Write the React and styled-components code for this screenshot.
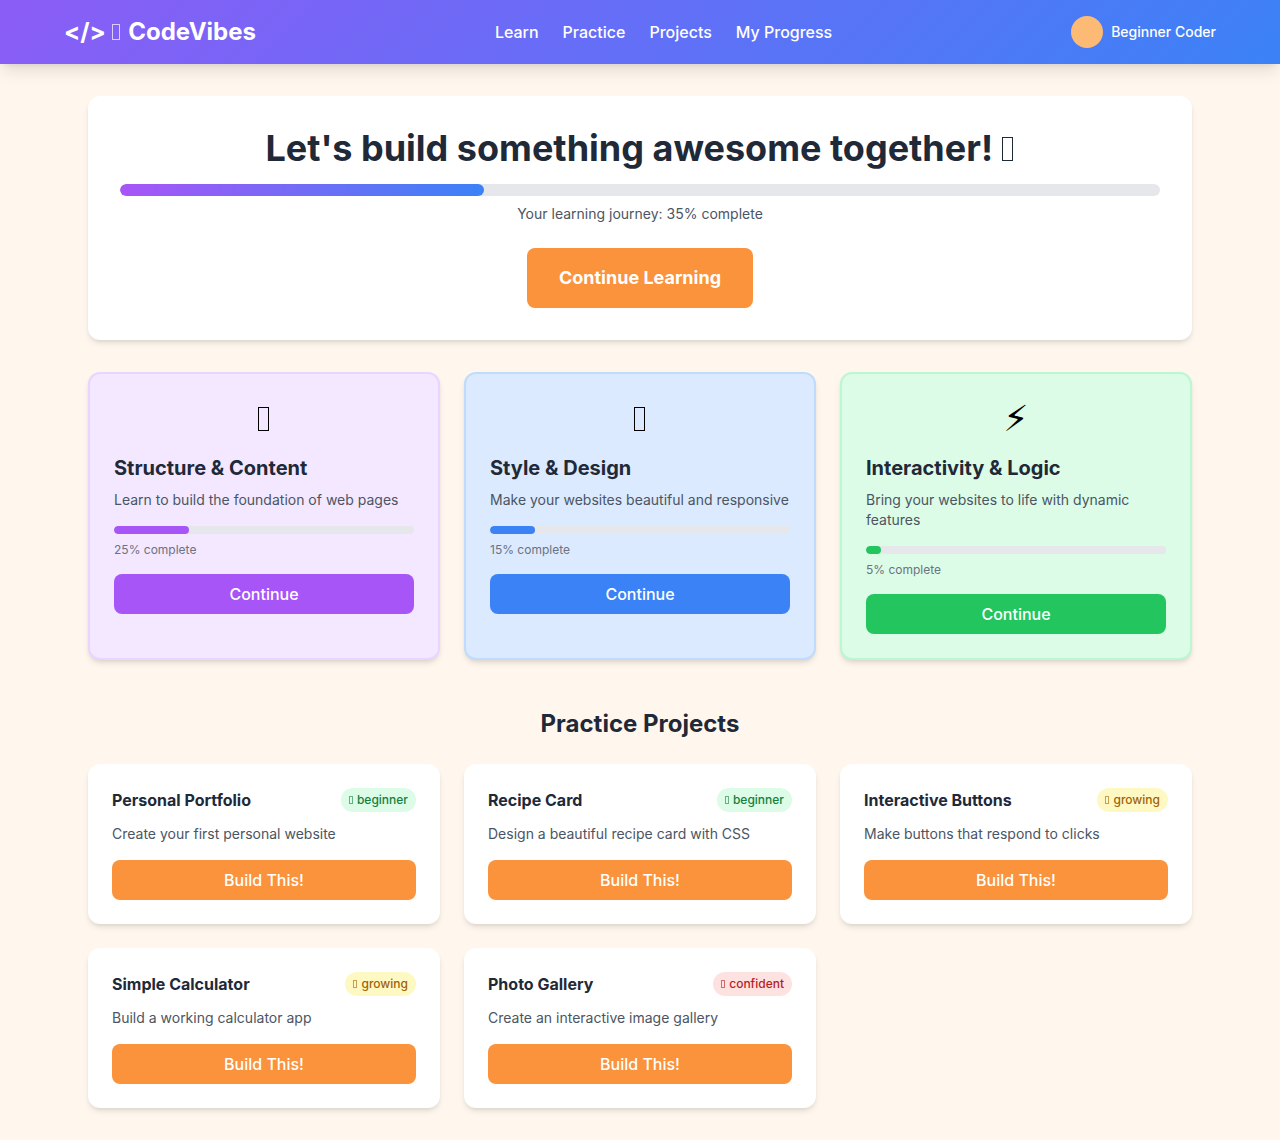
import styled, {createGlobalStyle} from "styled-components";

const GlobalStyle = createGlobalStyle`
  *, *::before, *::after {
    box-sizing: border-box;
  }

  body {
    margin: 0;
    background-color: #fff7ed;
    color: #1f2937;
    font-family: Inter, "DejaVu Sans", sans-serif;
    font-size: 16px;
    line-height: 24px;
  }

  h1, h2, h3, p, ul {
    margin: 0;
    padding: 0;
  }
`

const StyledHeader = styled.header`
  background: linear-gradient(135deg, #8b5cf6, #3b82f6);
  box-shadow: 0 10px 15px -3px rgba(0, 0, 0, 0.1), 0 4px 6px -4px rgba(0, 0, 0, 0.1);
  color: white;
  padding: 16px;
`

const HeaderContent = styled.div`
  display: flex;
  align-items: center;
  justify-content: space-between;
  max-width: 1152px;
  margin: 0 auto;
`

const Logo = styled.div`
  font-size: 24px;
  line-height: 32px;
  font-weight: 700;
`

const NavList = styled.ul`
  display: flex;
  gap: 24px;
  list-style: none;
`

const NavLink = styled.a`
  color: white;
  font-weight: 500;
  text-decoration: none;

  &:hover {
    color: #fed7aa;
  }
`

const User = styled.div`
  display: flex;
  align-items: center;
  gap: 8px;
  font-size: 14px;
  line-height: 20px;
  font-weight: 500;
`

const Avatar = styled.span`
  width: 32px;
  height: 32px;
  border-radius: 50%;
  background-color: #fdba74;
`

const Main = styled.main`
  max-width: 1152px;
  margin: 0 auto;
  padding: 32px 24px;
`

const Panel = styled.div`
  background-color: white;
  border-radius: 12px;
  box-shadow: 0 4px 6px -1px rgba(0, 0, 0, 0.1), 0 2px 4px -2px rgba(0, 0, 0, 0.1);
`

const Hero = styled(Panel).attrs({as: "section"})`
  padding: 32px;
  margin-bottom: 32px;
  text-align: center;
`

const HeroTitle = styled.h1`
  font-size: 36px;
  line-height: 40px;
  font-weight: 700;
  margin-bottom: 16px;
`

const glyphSizes = {
    small: {width: "4px", height: "8px", margin: "1px", opacity: 0.6},
    medium: {width: "8px", height: "16px", margin: "3px", opacity: 0.7},
    large: {width: "11px", height: "24px", margin: "2px", opacity: 1},
}

// thin upright box standing on the text baseline
const Glyph = styled.span.attrs({"aria-hidden": true})`
  display: inline-block;
  width: ${({$size}) => glyphSizes[$size].width};
  height: ${({$size}) => glyphSizes[$size].height};
  margin-right: ${({$size}) => glyphSizes[$size].margin};
  opacity: ${({$size}) => glyphSizes[$size].opacity};
  border: 1px solid currentColor;
`

const Track = styled.div`
  height: ${({$height}) => $height};
  border-radius: 9999px;
  background-color: #e5e7eb;
  overflow: hidden;
  margin-bottom: 8px;
`

const Fill = styled.div`
  height: 100%;
  border-radius: 9999px;
  background: ${({$fill}) => $fill};
`

const HeroText = styled.p`
  color: #4b5563;
  font-size: 14px;
  line-height: 20px;
  margin-bottom: 24px;
`

const Button = styled.button`
  display: block;
  width: 100%;
  padding: 8px 16px;
  border: none;
  border-radius: 8px;
  background-color: ${({$color}) => $color || "#fb923c"};
  color: white;
  font-family: inherit;
  font-size: 16px;
  line-height: 24px;
  font-weight: 500;
  cursor: pointer;

  &:hover {
    filter: brightness(0.95);
  }
`

const HeroButton = styled(Button)`
  display: inline-block;
  vertical-align: top;
  width: auto;
  padding: 16px 32px;
  font-size: 18px;
  line-height: 28px;
  font-weight: 700;
`

const Grid = styled.div`
  display: grid;
  grid-template-columns: repeat(3, 1fr);
  gap: 24px;

  @media (max-width: 900px) {
    grid-template-columns: 1fr;
  }
`

const StyledPathCard = styled(Panel)`
  padding: 24px;
  border: 2px solid ${({$border}) => $border};
  background-color: ${({$background}) => $background};
`

const PathIcon = styled.div`
  color: black;
  font-size: 36px;
  line-height: 40px;
  text-align: center;
  margin-bottom: 16px;
`

const PathTitle = styled.h3`
  font-size: 20px;
  line-height: 28px;
  font-weight: 700;
  margin-bottom: 8px;
`

const Description = styled.p`
  color: #4b5563;
  font-size: 14px;
  line-height: 20px;
  margin-bottom: 16px;
`

const PathProgress = styled.p`
  color: #6b7280;
  font-size: 12px;
  line-height: 16px;
  margin-bottom: 16px;
`

const SectionTitle = styled.h2`
  font-size: 24px;
  line-height: 32px;
  font-weight: 700;
  text-align: center;
  margin: 48px 0 24px;
`

const StyledProjectCard = styled(Panel)`
  padding: 24px;
`

const ProjectHeader = styled.div`
  display: flex;
  align-items: center;
  justify-content: space-between;
  margin-bottom: 12px;
`

const ProjectTitle = styled.h3`
  font-size: 16px;
  line-height: 24px;
  font-weight: 700;
`

const Badge = styled.span`
  padding: 4px 8px;
  border-radius: 9999px;
  background-color: ${({$background}) => $background};
  color: ${({$color}) => $color};
  font-size: 12px;
  line-height: 16px;
  font-weight: 500;
`

const links = ["Learn", "Practice", "Projects", "My Progress"]

const paths = [
    {
        icon: <Glyph $size="large"/>,
        title: "Structure & Content",
        text: "Learn to build the foundation of web pages",
        progress: 25,
        color: "#a855f7",
        background: "#f3e8ff",
        border: "#e9d5ff",
    },
    {
        icon: <Glyph $size="large"/>,
        title: "Style & Design",
        text: "Make your websites beautiful and responsive",
        progress: 15,
        color: "#3b82f6",
        background: "#dbeafe",
        border: "#bfdbfe",
    },
    {
        icon: "⚡",
        title: "Interactivity & Logic",
        text: "Bring your websites to life with dynamic features",
        progress: 5,
        color: "#22c55e",
        background: "#dcfce7",
        border: "#bbf7d0",
    },
]

const levels = {
    beginner: {background: "#dcfce7", color: "#15803d"},
    growing: {background: "#fef9c3", color: "#a16207"},
    confident: {background: "#fee2e2", color: "#b91c1c"},
}

const projects = [
    {title: "Personal Portfolio", text: "Create your first personal website", level: "beginner"},
    {title: "Recipe Card", text: "Design a beautiful recipe card with CSS", level: "beginner"},
    {title: "Interactive Buttons", text: "Make buttons that respond to clicks", level: "growing"},
    {title: "Simple Calculator", text: "Build a working calculator app", level: "growing"},
    {title: "Photo Gallery", text: "Create an interactive image gallery", level: "confident"},
]

function ProgressBar({value, label, fill, height = "8px"}) {
    return (
        <Track $height={height} role="progressbar" aria-label={label} aria-valuenow={value}
               aria-valuemin={0} aria-valuemax={100}>
            <Fill $fill={fill} style={{width: `${value}%`}}/>
        </Track>
    )
}

function Header() {
    return (
        <StyledHeader>
            <HeaderContent>
                <Logo>&lt;/&gt; <Glyph $size="medium"/> CodeVibes</Logo>
                <nav>
                    <NavList>
                        {links.map((link) => (
                            <li key={link}>
                                <NavLink href="#">{link}</NavLink>
                            </li>
                        ))}
                    </NavList>
                </nav>
                <User>
                    <Avatar/>
                    <span>Beginner Coder</span>
                </User>
            </HeaderContent>
        </StyledHeader>
    )
}

function PathCard({path}) {
    return (
        <StyledPathCard $background={path.background} $border={path.border}>
            <PathIcon>{path.icon}</PathIcon>
            <PathTitle>{path.title}</PathTitle>
            <Description>{path.text}</Description>
            <ProgressBar value={path.progress} label={path.title} fill={path.color}/>
            <PathProgress>{path.progress}% complete</PathProgress>
            <Button type="button" $color={path.color}>Continue</Button>
        </StyledPathCard>
    )
}

function ProjectCard({project}) {
    const level = levels[project.level]

    return (
        <StyledProjectCard>
            <ProjectHeader>
                <ProjectTitle>{project.title}</ProjectTitle>
                <Badge $background={level.background} $color={level.color}>
                    <Glyph $size="small"/> {project.level}
                </Badge>
            </ProjectHeader>
            <Description>{project.text}</Description>
            <Button type="button">Build This!</Button>
        </StyledProjectCard>
    )
}

function App() {
    const journey = 35

    return (
        <>
            <GlobalStyle/>
            <Header/>
            <Main>
                <Hero>
                    <HeroTitle>Let's build something awesome together! <Glyph $size="large"/></HeroTitle>
                    <ProgressBar value={journey} label="Your learning journey" height="12px"
                                 fill="linear-gradient(90deg, #a855f7, #3b82f6)"/>
                    <HeroText>Your learning journey: {journey}% complete</HeroText>
                    <HeroButton type="button">Continue Learning</HeroButton>
                </Hero>

                <Grid>
                    {paths.map((path) => <PathCard key={path.title} path={path}/>)}
                </Grid>

                <SectionTitle>Practice Projects</SectionTitle>
                <Grid>
                    {projects.map((project) => <ProjectCard key={project.title} project={project}/>)}
                </Grid>
            </Main>
        </>
    )
}

export default App
